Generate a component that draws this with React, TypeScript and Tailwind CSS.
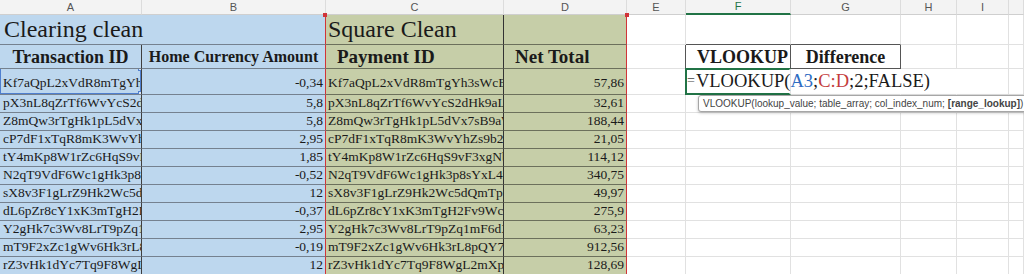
import type { ReactNode } from 'react';

const COLS = ['A', 'B', 'C', 'D', 'E', 'F', 'G', 'H', 'I', ''];

const ROWS: [string, string, string][] = [
  ['Kf7aQpL2xVdR8mTgYh3sWcB9nQ', '-0,34', '57,86'],
  ['pX3nL8qZrTf6WvYcS2dHk9aLm4', '5,8', '32,61'],
  ['Z8mQw3rTgHk1pL5dVx7sB9aWn2', '5,8', '188,44'],
  ['cP7dF1xTqR8mK3WvYhZs9b2Lq6', '2,95', '21,05'],
  ['tY4mKp8W1rZc6HqS9vF3xgNb7d', '1,85', '114,12'],
  ['N2qT9VdF6Wc1gHk3p8sYxL4mR5', '-0,52', '340,75'],
  ['sX8v3F1gLrZ9Hk2Wc5dQmTp7yB', '12', '49,97'],
  ['dL6pZr8cY1xK3mTgH2Fv9Wc4sN', '-0,37', '275,9'],
  ['Y2gHk7c3Wv8LrT9pZq1mF6dXs3', '2,95', '63,23'],
  ['mT9F2xZc1gWv6Hk3rL8pQY7sD4', '-0,19', '912,56'],
  ['rZ3vHk1dYc7Tq9F8WgL2mXp5bK', '12', '128,69'],
];

function Blank({ className = '' }: { className?: string }) {
  return <div className={`border-b border-r border-[#e1e1e1] ${className}`} />;
}

// columns E..J of an ordinary row
function EmptyTail() {
  return (
    <>
      <Blank />
      <Blank />
      <Blank />
      <Blank />
      <Blank />
      <Blank />
    </>
  );
}

function DataRow({ row, first, tail }: { row: [string, string, string]; first?: boolean; tail: ReactNode }) {
  const pad = first ? 'pb-[2px]' : '';
  return (
    <>
      <div className={`relative flex items-end overflow-hidden whitespace-nowrap bg-[#bdd7ee] border-b border-r border-b-[#75818f] border-r-[#3f3f3f] pl-[3px] ${pad}`}>
        {row[0]}
        {first && (
          <div className="absolute inset-0 -top-px border border-[#4f7fcf]">
            <div className="absolute -right-[3px] -top-[3px] h-[5px] w-[5px] border border-[#4f7fcf] bg-[#dbe7f7]" />
            <div className="absolute -right-[3px] -bottom-[3px] h-[5px] w-[5px] border border-[#4f7fcf] bg-[#dbe7f7]" />
          </div>
        )}
      </div>
      <div className={`flex items-end justify-end whitespace-nowrap bg-[#bdd7ee] border-b border-r border-b-[#75818f] border-r-[#d13438] pr-[2px] ${pad}`}>
        {row[1]}
      </div>
      <div className={`flex items-end overflow-hidden whitespace-nowrap bg-[#c6cea8] border-b border-r border-b-[#6c705c] border-r-[#333333] pl-[2px] ${pad}`}>
        {row[0]}
      </div>
      <div className={`flex items-end justify-end whitespace-nowrap bg-[#c6cea8] border-b border-r border-b-[#6c705c] border-r-[#d13438] pr-[2px] ${pad}`}>
        {row[2]}
      </div>
      {tail}
    </>
  );
}

export default function App() {
  return (
    <div className="h-[274px] w-full overflow-hidden bg-white text-[13.5px] leading-[18px] text-[#1a1a1a] font-['Liberation_Serif',serif]">
      <div className="grid grid-cols-[142px_184px_178px_123px_59px_105px_110px_56px_52px_1fr] grid-rows-[15px_30px_24px_26px_repeat(10,18px)]">
        {/* column letters */}
        {COLS.map((c) => (
          <div
            key={c || 'J'}
            className={
              c === 'F'
                ? "flex items-center justify-center bg-[#f3f3f3] border-r border-b-2 border-r-[#dcdcdc] border-b-[#217346] text-[11px] leading-none text-[#217346] font-['Liberation_Sans',sans-serif]"
                : "flex items-center justify-center bg-[#f3f3f3] border-r border-b border-r-[#dcdcdc] border-b-[#cfcfcf] text-[11px] leading-none text-[#555] font-['Liberation_Sans',sans-serif]"
            }
          >
            {c}
          </div>
        ))}

        {/* row 1 */}
        <div className="col-span-2 flex items-end whitespace-nowrap bg-[#bdd7ee] border-b border-r border-b-[#75818f] border-r-[#d13438] pl-[4px] pb-[1px] text-[24px] leading-[28px]">
          Clearing clean
        </div>
        <div className="relative flex items-end whitespace-nowrap bg-[#c6cea8] border-b border-r border-b-[#6c705c] border-r-[#333333] pl-[2px] pb-[1px] text-[24px] leading-[28px]">
          Square Clean
          <div className="absolute -left-[3px] -top-[2px] h-[4px] w-[4px] bg-[#d13438]" />
        </div>
        <div className="relative bg-[#c6cea8] border-b border-r border-b-[#6c705c] border-r-[#d13438]">
          <div className="absolute -right-[3px] -top-[2px] h-[4px] w-[4px] bg-[#d13438]" />
        </div>
        <Blank />
        <Blank className="border-b-[#555]" />
        <Blank className="border-b-[#555]" />
        <Blank />
        <Blank />
        <Blank />

        {/* row 2 */}
        <div className="flex items-end justify-center whitespace-nowrap bg-[#bdd7ee] border-b border-r border-b-[#75818f] border-r-[#3f3f3f] text-[18px] leading-[22px] font-bold">
          Transaction ID
        </div>
        <div className="flex items-end justify-center whitespace-nowrap bg-[#bdd7ee] border-b border-r border-b-[#75818f] border-r-[#d13438] pb-[1px] text-[16px] leading-[20px] font-bold">
          Home Currency Amount
        </div>
        <div className="flex items-end whitespace-nowrap bg-[#c6cea8] border-b border-r border-b-[#6c705c] border-r-[#333333] pl-[11px] text-[19px] leading-[22px] font-bold">
          Payment ID
        </div>
        <div className="flex items-end whitespace-nowrap bg-[#c6cea8] border-b border-r border-b-[#6c705c] border-r-[#d13438] pl-[11px] text-[19px] leading-[22px] font-bold">
          Net Total
        </div>
        <Blank className="border-r-[#555]" />
        <div className="flex items-end whitespace-nowrap border-b border-r border-[#555] pl-[11px] text-[18px] leading-[22px] font-bold">
          VLOOKUP
        </div>
        <div className="flex items-end justify-center whitespace-nowrap border-b border-r border-[#555] text-[18px] leading-[22px] font-bold">
          Difference
        </div>
        <Blank />
        <Blank />
        <Blank />

        {/* row 3: formula being typed */}
        <DataRow
          row={ROWS[0]}
          first
          tail={
            <>
              <Blank />
              <div className="relative border-b border-r border-[#e1e1e1]">
                <div className="pointer-events-none absolute -inset-px border-2 border-[#217346] border-r-transparent" />
                <div className="relative z-10 flex h-full items-end whitespace-nowrap pl-[1px] pb-[2px] text-[18.5px] leading-[22px]">
                  <span className="mr-[1px] text-[14px] text-[#444]">=</span>
                  <span>VLOOKUP(</span>
                  <span className="text-[#2f6cc2]">A3</span>
                  <span>;</span>
                  <span className="text-[#c43c3c]">C:D</span>
                  <span>;2;FALSE)</span>
                </div>
                <div className="absolute left-[12px] top-[26px] z-20 flex h-[17px] items-center whitespace-nowrap rounded-[3px] border border-[#a6a6a6] bg-white px-[4px] text-[10px] leading-none text-[#444] shadow-[0_1px_3px_rgba(0,0,0,0.25)] font-['Liberation_Sans',sans-serif]">
                  VLOOKUP(lookup_value; table_array; col_index_num; <b className="ml-[3px] font-bold">[range_lookup]</b>)
                </div>
              </div>
              <Blank className="border-r-white" />
              <Blank className="border-r-white" />
              <Blank />
              <Blank />
            </>
          }
        />

        {ROWS.slice(1).map((r) => (
          <DataRow key={r[0]} row={r} tail={<EmptyTail />} />
        ))}
      </div>
    </div>
  );
}
